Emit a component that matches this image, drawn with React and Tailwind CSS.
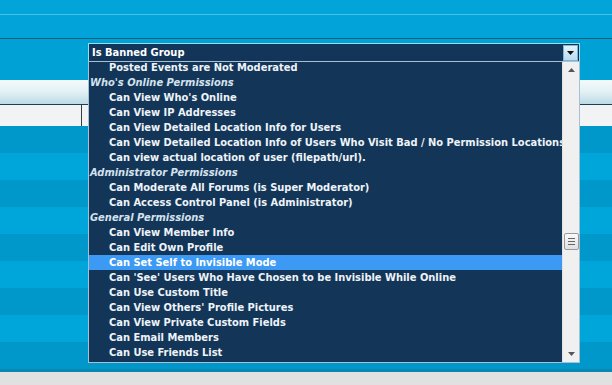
const rows = [
  { t: "Posted Events are Not Moderated" },
  { t: "Who's Online Permissions", h: true },
  { t: "Can View Who's Online" },
  { t: "Can View IP Addresses" },
  { t: "Can View Detailed Location Info for Users" },
  { t: "Can View Detailed Location Info of Users Who Visit Bad / No Permission Locations" },
  { t: "Can view actual location of user (filepath/url)." },
  { t: "Administrator Permissions", h: true },
  { t: "Can Moderate All Forums (is Super Moderator)" },
  { t: "Can Access Control Panel (is Administrator)" },
  { t: "General Permissions", h: true },
  { t: "Can View Member Info" },
  { t: "Can Edit Own Profile" },
  { t: "Can Set Self to Invisible Mode", sel: true },
  { t: "Can 'See' Users Who Have Chosen to be Invisible While Online" },
  { t: "Can Use Custom Title" },
  { t: "Can View Others' Profile Pictures" },
  { t: "Can View Private Custom Fields" },
  { t: "Can Email Members" },
  { t: "Can Use Friends List" },
  { t: "Can Receive Friend Requests" },
];

const stripes = [0, 1, 2, 3, 4, 5, 6, 7, 8];

const App = () => {
  return (
    <div
      className="w-[612px] h-[385px] overflow-hidden bg-[#00a2d6] flex flex-col"
      style={{ fontFamily: '"DejaVu Sans Condensed", "DejaVu Sans", Tahoma, sans-serif' }}
    >
      {/* top navbar bands */}
      <div className="h-[14px] bg-[#03a4d8]"></div>
      <div className="h-px bg-[#4cbfe6]"></div>
      <div className="h-[23px] bg-[#01a3d8]"></div>
      <div className="h-px bg-[#145a78]"></div>

      {/* select row */}
      <div className="h-[41px] bg-[#00a1d5] pl-[88px] pt-[4px] relative z-10">
        <div className="relative w-[492px]">
          <div className="h-[19px] w-[492px] bg-[#123559] border border-[#8fe2f6] flex items-center justify-between pl-[3px] pr-px">
            <span className="text-[11px] font-bold text-white leading-none">Is Banned Group</span>
            <div className="w-[15px] h-[16px] bg-gradient-to-b from-[#e4f2fb] to-[#b9dcf0] border border-[#7fb3d1] flex items-center justify-center">
              <svg width="7" height="4" viewBox="0 0 7 4">
                <path d="M0 0 H7 L3.5 4 Z" fill="#111" />
              </svg>
            </div>
          </div>

          {/* open list */}
          <div className="absolute left-0 top-[18px] w-[492px] h-[302px] bg-[#133658] border border-[#a8c0d4] flex overflow-hidden">
            <div className="flex-1 overflow-hidden">
              <div className="mt-[-2px] flex flex-col">
                {rows.map((r, i) => (
                  <div
                    key={i}
                    className={`h-[15px] flex items-center whitespace-nowrap text-[11px] font-bold leading-none ${
                      r.h ? "pl-[1px] italic text-[#d5e2ee]" : "pl-[20px] text-[#eef3f8]"
                    } ${r.sel ? "bg-[#3c99f4] text-white" : ""}`}
                  >
                    {r.t}
                  </div>
                ))}
              </div>
            </div>
            {/* scrollbar */}
            <div className="w-[17px] bg-[#f0f0f0] border-l border-[#e2e2e2] flex flex-col items-center justify-between py-[6px]">
              <svg width="7" height="4" viewBox="0 0 7 4">
                <path d="M3.5 0 L7 4 H0 Z" fill="#555" />
              </svg>
              <div className="flex-1 w-full flex flex-col pt-[161px]">
                <div className="w-[15px] mx-auto h-[17px] bg-gradient-to-b from-[#fafafa] to-[#e0e0e0] border border-[#9a9a9a] rounded-[2px] flex flex-col items-center justify-center gap-[2px]">
                  <div className="w-[7px] h-px bg-[#666]"></div>
                  <div className="w-[7px] h-px bg-[#666]"></div>
                  <div className="w-[7px] h-px bg-[#666]"></div>
                </div>
              </div>
              <svg width="7" height="4" viewBox="0 0 7 4">
                <path d="M0 0 H7 L3.5 4 Z" fill="#555" />
              </svg>
            </div>
          </div>
        </div>
      </div>

      {/* table head */}
      <div className="h-[24px] bg-gradient-to-b from-[#f4fafc] via-[#e2f0f5] to-[#bcdbe6]"></div>
      <div className="h-px bg-[#1d3f52]"></div>
      <div className="h-[21px] bg-[#00a2d6] flex">
        <div className="w-[82px] bg-[#f1f3f4] border-r border-[#3a3a3a]"></div>
        <div className="flex-1 bg-[#f1f3f4]"></div>
      </div>

      {/* striped rows */}
      {stripes.map((i) => (
        <div
          key={i}
          className={`h-[27px] ${i % 2 === 0 ? "bg-[#0098cb]" : "bg-[#00a6da]"}`}
        ></div>
      ))}
      <div className="h-[3px] bg-[#0a86b0]"></div>
      <div className="flex-1 bg-[#e1e1e1]"></div>
    </div>
  );
};

export default App;
